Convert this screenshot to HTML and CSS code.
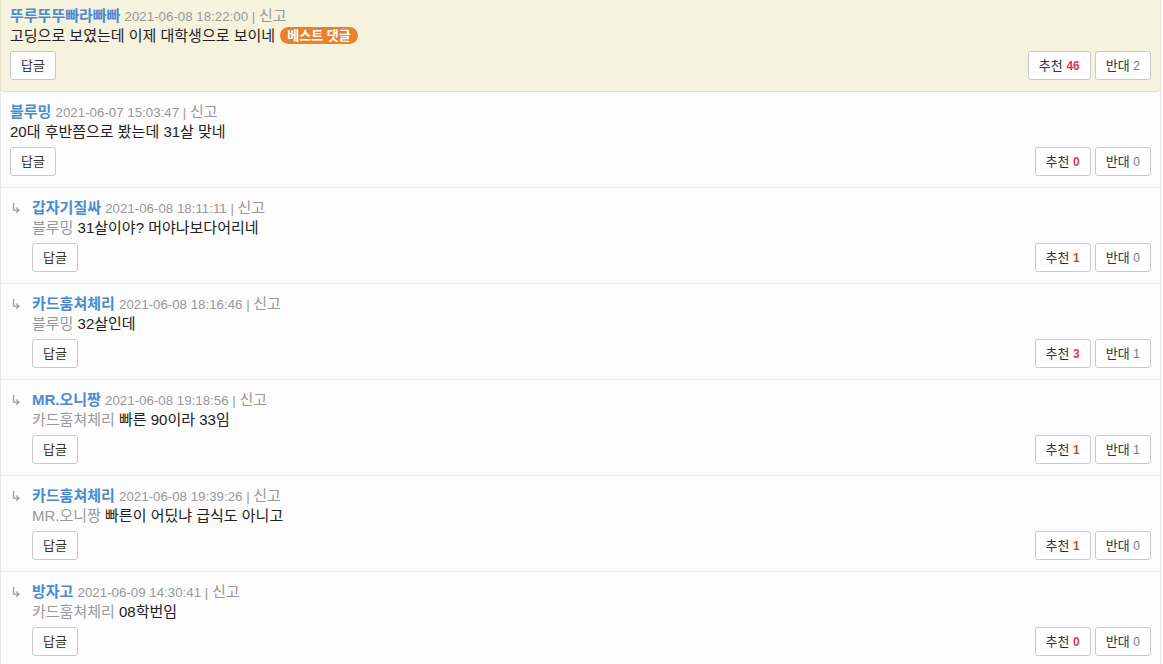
FILE: index.html
```html
<!DOCTYPE html>
<html lang="ko">
<head>
<meta charset="utf-8">
<link rel="stylesheet" href="styles.css">
</head>
<body>
<div class="comments">
  <div class="comment best">
    <div class="body">
      <div class="meta"><span class="name">뚜루뚜뚜빠라빠빠</span> <span class="date">2021-06-08 18:22:00 | </span><span class="report">신고</span></div>
      <div class="text">고딩으로 보였는데 이제 대학생으로 보이네 <span class="badge">베스트 댓글</span></div>
      <div class="actions">
        <button class="btn">답글</button>
        <div class="votes"><button class="btn">추천 <span class="up">46</span></button><button class="btn">반대 <span class="down">2</span></button></div>
      </div>
    </div>
  </div>

  <div class="comment">
    <div class="body">
      <div class="meta"><span class="name">블루밍</span> <span class="date">2021-06-07 15:03:47 | </span><span class="report">신고</span></div>
      <div class="text">20대 후반쯤으로 봤는데 31살 맞네</div>
      <div class="actions">
        <button class="btn">답글</button>
        <div class="votes"><button class="btn">추천 <span class="up">0</span></button><button class="btn">반대 <span class="down">0</span></button></div>
      </div>
    </div>
  </div>

  <div class="comment reply">
    <span class="arrow">↳</span>
    <div class="body">
      <div class="meta"><span class="name">갑자기질싸</span> <span class="date">2021-06-08 18:11:11 | </span><span class="report">신고</span></div>
      <div class="text"><span class="mention">블루밍</span> 31살이야? 머야나보다어리네</div>
      <div class="actions">
        <button class="btn">답글</button>
        <div class="votes"><button class="btn">추천 <span class="up">1</span></button><button class="btn">반대 <span class="down">0</span></button></div>
      </div>
    </div>
  </div>

  <div class="comment reply">
    <span class="arrow">↳</span>
    <div class="body">
      <div class="meta"><span class="name">카드훔쳐체리</span> <span class="date">2021-06-08 18:16:46 | </span><span class="report">신고</span></div>
      <div class="text"><span class="mention">블루밍</span> 32살인데</div>
      <div class="actions">
        <button class="btn">답글</button>
        <div class="votes"><button class="btn">추천 <span class="up">3</span></button><button class="btn">반대 <span class="down">1</span></button></div>
      </div>
    </div>
  </div>

  <div class="comment reply">
    <span class="arrow">↳</span>
    <div class="body">
      <div class="meta"><span class="name">MR.오니짱</span> <span class="date">2021-06-08 19:18:56 | </span><span class="report">신고</span></div>
      <div class="text"><span class="mention">카드훔쳐체리</span> 빠른 90이라 33임</div>
      <div class="actions">
        <button class="btn">답글</button>
        <div class="votes"><button class="btn">추천 <span class="up">1</span></button><button class="btn">반대 <span class="down">1</span></button></div>
      </div>
    </div>
  </div>

  <div class="comment reply">
    <span class="arrow">↳</span>
    <div class="body">
      <div class="meta"><span class="name">카드훔쳐체리</span> <span class="date">2021-06-08 19:39:26 | </span><span class="report">신고</span></div>
      <div class="text"><span class="mention">MR.오니짱</span> 빠른이 어딨냐 급식도 아니고</div>
      <div class="actions">
        <button class="btn">답글</button>
        <div class="votes"><button class="btn">추천 <span class="up">1</span></button><button class="btn">반대 <span class="down">0</span></button></div>
      </div>
    </div>
  </div>

  <div class="comment reply">
    <span class="arrow">↳</span>
    <div class="body">
      <div class="meta"><span class="name">방자고</span> <span class="date">2021-06-09 14:30:41 | </span><span class="report">신고</span></div>
      <div class="text"><span class="mention">카드훔쳐체리</span> 08학번임</div>
      <div class="actions">
        <button class="btn">답글</button>
        <div class="votes"><button class="btn">추천 <span class="up">0</span></button><button class="btn">반대 <span class="down">0</span></button></div>
      </div>
    </div>
  </div>
</div>
</body>
</html>
```

FILE: styles.css
```css
html, body {
  margin: 0;
  padding: 0;
  background: #ffffff;
}

body {
  font-family: "Liberation Sans", "Noto Sans CJK KR", sans-serif;
  font-size: 15px;
  color: #222;
}

.comments {
  margin: -4px 2px 0 0;
  border: 1px solid #e6e6e6;
  border-radius: 4px;
  background: #fcfcfc;
}

.comment {
  display: flex;
  padding: 10px 9px 11px 9px;
  border-bottom: 1px solid #e8e8e8;
}

.comment:last-child {
  border-bottom: none;
}

.comment.best {
  background: #f5f3de;
  border: 1px solid #e4e1c9;
  border-radius: 4px;
  margin: -1px -1px 0 -1px;
  padding-top: 9px;
  padding-bottom: 10px;
}

.comment.best .body {
  padding-bottom: 1px;
}

.arrow {
  flex: 0 0 22px;
  width: 22px;
  color: #999;
  line-height: 20px;
  font-size: 14px;
}

.body {
  flex: 1;
  min-width: 0;
}

.meta {
  line-height: 20px;
  height: 20px;
}

.name {
  color: #4a8bd0;
  font-weight: bold;
}

.date {
  color: #999;
  font-size: 13.3px;
}

.report {
  color: #999;
}

.text {
  line-height: 20px;
  height: 20px;
  color: #222;
}

.mention {
  color: #9a9a9a;
}

.badge {
  display: inline-block;
  background: #e8812c;
  color: #fff;
  font-weight: bold;
  font-size: 13px;
  line-height: 17px;
  height: 17px;
  padding: 0 7px;
  border-radius: 9px;
  margin-left: 1px;
  vertical-align: 1px;
}

.actions {
  display: flex;
  justify-content: space-between;
  align-items: center;
  margin-top: 5px;
}

.votes {
  display: flex;
  gap: 4px;
}

.btn {
  font-family: "Liberation Sans", "Noto Sans CJK KR", sans-serif;
  font-size: 13px;
  line-height: 17px;
  height: 29px;
  padding: 5px 10px;
  border: 1px solid #c8c8c8;
  border-radius: 3px;
  background: #fff;
  color: #333;
}

.up {
  color: #e2383f;
  font-weight: bold;
  font-size: 12px;
}

.down {
  color: #6f7782;
  font-size: 12px;
}
```
